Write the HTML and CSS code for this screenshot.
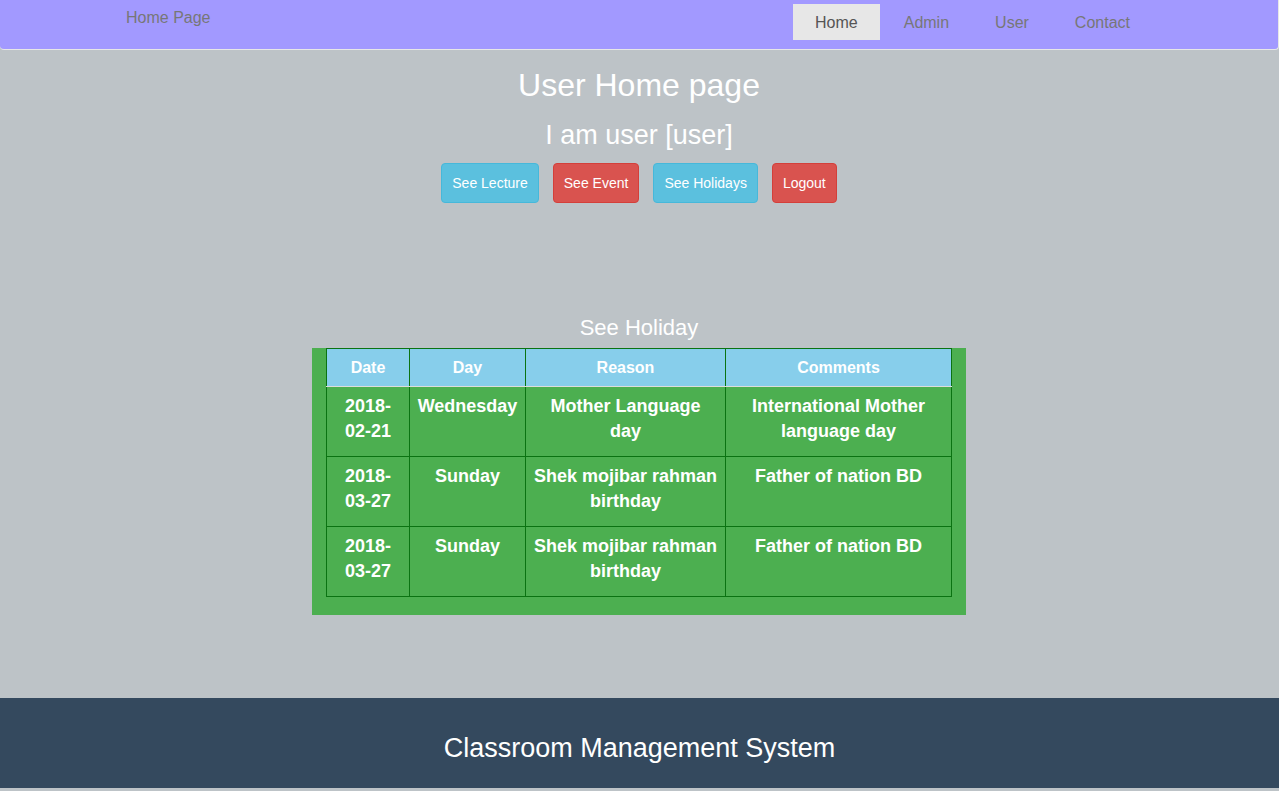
FILE: index.html
```html
<!DOCTYPE html>
<html lang="en">
<head>
<meta charset="utf-8">
<title>User Home page</title>
<link rel="stylesheet" href="styles.css">
</head>
<body>
<nav class="navbar">
  <div class="navbar-inner">
    <a class="brand" href="#">Home Page</a>
    <ul class="menu">
      <li><a class="menu-link active" href="#">Home</a></li>
      <li><a class="menu-link" href="#">Admin</a></li>
      <li><a class="menu-link" href="#">User</a></li>
      <li><a class="menu-link" href="#">Contact</a></li>
    </ul>
  </div>
</nav>
<main class="content">
  <h1 class="title">User Home page</h1>
  <h2 class="subtitle">I am user [user]</h2>
  <div class="actions">
    <button type="button" class="btn btn-info">See Lecture</button>
    <button type="button" class="btn btn-danger">See Event</button>
    <button type="button" class="btn btn-info">See Holidays</button>
    <button type="button" class="btn btn-danger">Logout</button>
  </div>
  <section class="holidays">
    <h3 class="section-title">See Holiday</h3>
    <div class="panel">
      <table class="table">
        <colgroup>
          <col class="col-date"><col class="col-day"><col class="col-reason"><col class="col-comments">
        </colgroup>
        <thead>
          <tr><th>Date</th><th>Day</th><th>Reason</th><th>Comments</th></tr>
        </thead>
        <tbody>
          <tr><td>2018-02-21</td><td>Wednesday</td><td>Mother Language day</td><td>International Mother language day</td></tr>
          <tr><td>2018-03-27</td><td>Sunday</td><td>Shek mojibar rahman birthday</td><td>Father of nation BD</td></tr>
          <tr><td>2018-03-27</td><td>Sunday</td><td>Shek mojibar rahman birthday</td><td>Father of nation BD</td></tr>
        </tbody>
      </table>
    </div>
  </section>
</main>
<footer class="footer">Classroom Management System</footer>
</body>
</html>
```

FILE: styles.css
```css
* {
  box-sizing: border-box;
}

body {
  margin: 0;
  background: #bdc3c7;
  color: #fff;
  font-family: "Liberation Sans", Arial, sans-serif;
  font-size: 16px;
}

.navbar {
  background: #a299ff;
  border: 1px solid #e7e7e7;
  border-width: 0 1px 1px 0;
  border-radius: 0 0 4px 4px;
}

.navbar-inner {
  display: flex;
  justify-content: space-between;
  align-items: flex-start;
  max-width: 1026px;
  min-height: 49px;
  margin: 0 auto;
}

.brand {
  padding-top: 8px;
  color: #777;
  line-height: 20px;
  text-decoration: none;
}

.menu {
  display: flex;
  gap: 2px;
  margin: 0;
  padding: 4px 0 0;
  list-style: none;
}

.menu-link {
  display: block;
  padding: 9px 22px 7px;
  color: #777;
  line-height: 20px;
  text-decoration: none;
}

.menu-link.active {
  background: #e7e7e7;
  color: #555;
}

.content {
  padding: 16px 1px 83px 0;
  text-align: center;
}

.title,
.subtitle,
.section-title {
  margin: 0;
  font-weight: 400;
}

.title {
  font-size: 32px;
  line-height: 38px;
}

.subtitle {
  margin-top: 15px;
  font-size: 27px;
  line-height: 32px;
}

.actions {
  display: flex;
  flex-wrap: wrap;
  justify-content: center;
  gap: 14px;
  margin-top: 12px;
}

.btn {
  height: 40px;
  padding: 0 10px;
  border: 1px solid;
  border-radius: 4px;
  color: #fff;
  font-family: inherit;
  font-size: 14px;
}

.btn-info {
  background: #5bc0de;
  border-color: #46b8da;
}

.btn-danger {
  background: #d9534f;
  border-color: #d43f3a;
}

.holidays {
  margin-top: 112px;
}

.section-title {
  font-size: 22px;
  line-height: 25px;
}

.panel {
  max-width: 654px;
  margin: 8px auto 0;
  padding: 0 14px 18px;
  background: #4caf50;
}

.table {
  width: 100%;
  border-collapse: collapse;
  table-layout: fixed;
  font-weight: 700;
}

.col-date {
  width: 83px;
}

.col-day {
  width: 116px;
}

.col-reason {
  width: 200px;
}

.table th,
.table td {
  border: 1px solid #0b7312;
  vertical-align: top;
}

.table th {
  padding: 8px 7px;
  border-bottom-color: #ddd;
  background: #87ceeb;
  line-height: 21px;
}

.table td {
  padding: 7px 7px 12px;
  font-size: 18px;
  line-height: 25px;
}

.table tbody tr:first-child td {
  border-top: none;
}

.footer {
  margin-bottom: 3px;
  padding: 34px 0 24px;
  background: #34495e;
  font-size: 27px;
  line-height: 32px;
  text-align: center;
}
```
